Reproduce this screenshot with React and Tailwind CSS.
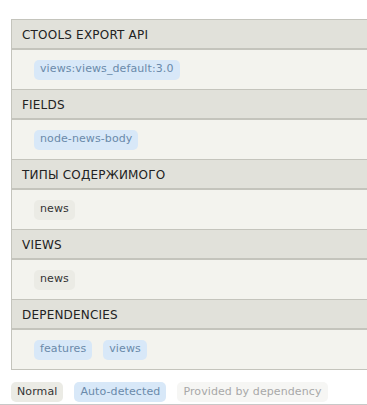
import React from 'react'

const sections = [
  { title: 'Ctools export API', items: [{ label: 'views:views_default:3.0', kind: 'auto' }] },
  { title: 'Fields', items: [{ label: 'node-news-body', kind: 'auto' }] },
  { title: 'Типы содержимого', items: [{ label: 'news', kind: 'normal' }] },
  { title: 'Views', items: [{ label: 'news', kind: 'normal' }] },
  { title: 'Dependencies', items: [{ label: 'features', kind: 'auto' }, { label: 'views', kind: 'auto' }] },
]

const tagStyles = {
  normal: 'bg-[#ebebe5] text-[#333333]',
  auto: 'bg-[#d8e8f8] text-[#6a8aaa]',
  provided: 'bg-[#f6f6f4] text-[#a8a8a8]',
}

function Tag({ label, kind }) {
  return (
    <span className={`inline-flex h-[20px] items-center rounded-[5px] px-[6px] text-[11px] tracking-[0.1px] ${tagStyles[kind]}`}>
      {label}
    </span>
  )
}

export default function App() {
  return (
    <div
      className="w-[367px] h-[405px] overflow-hidden bg-white text-[12px] border-b border-[#c8c8c8]"
      style={{ fontFamily: '"DejaVu Sans", Verdana, sans-serif' }}
    >
      <div className="pt-[19px] pl-[11px]">
        <div className="w-[370px] border-l border-b border-[#c4c4bc]">
          {sections.map((section) => (
            <div key={section.title} className="border-t border-[#c4c4bc]">
              <div className="h-[30px] flex items-center pt-[2px] px-[10px] bg-[#e1e1da] border-b-2 border-[#c4c4bc] uppercase text-[#222222] tracking-[0.2px]">
                {section.title}
              </div>
              <div className="h-[39px] flex items-center gap-[11px] pl-[22px] bg-[#f3f3ee]">
                {section.items.map((item, idx) => (
                  <Tag key={idx} label={item.label} kind={item.kind} />
                ))}
              </div>
            </div>
          ))}
        </div>
      </div>
      <div className="flex gap-[11px] pl-[11px] mt-[12px]">
        <Tag label="Normal" kind="normal" />
        <Tag label="Auto-detected" kind="auto" />
        <Tag label="Provided by dependency" kind="provided" />
      </div>
    </div>
  )
}
